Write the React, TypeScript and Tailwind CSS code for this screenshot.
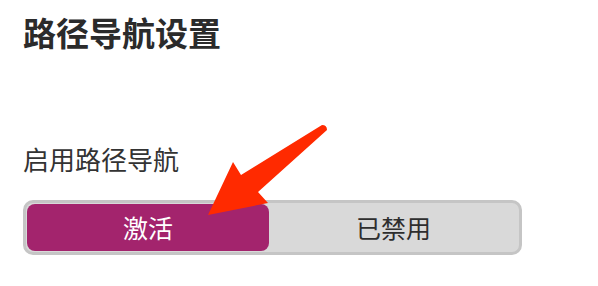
export default function App() {
  return (
    <div
      className="relative h-[286px] w-[598px] overflow-hidden bg-white px-[23px] pt-[16px]"
      style={{ fontFamily: '"Noto Sans CJK SC", "Noto Sans", sans-serif' }}
    >
      <h1 className="text-[33px] font-bold leading-[33px] text-[#2b2b2b]">路径导航设置</h1>

      <p className="mt-[97px] text-[26px] leading-[26px] text-[#333333]">启用路径导航</p>

      <div className="mt-[28px] flex h-[55px] w-[499px] rounded-[10px] border-[3px] border-[#c5c5c5] bg-[#d9d9d9] p-[1px]">
        <button className="flex w-[242px] items-center justify-center rounded-[8px] bg-[#a3246d] text-[25px] leading-none text-white">
          激活
        </button>
        <button className="flex flex-1 items-center justify-center text-[25px] leading-none text-[#2e2e2e]">
          已禁用
        </button>
      </div>

      <svg className="pointer-events-none absolute left-0 top-0" width="598" height="286" viewBox="0 0 598 286">
        <path
          d="M208 215 L233 162 L241 175 L322 125 Q327 125 327 130 L258 192 L268 203 Z"
          fill="#ff2a00"
        />
      </svg>
    </div>
  );
}
